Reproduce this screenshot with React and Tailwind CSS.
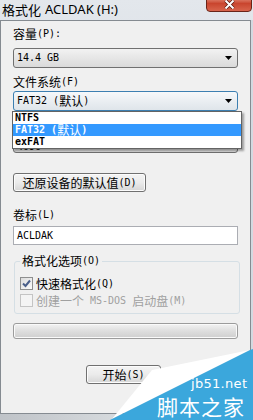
import React from "react";

// CJK text runs at the dialog's 12px, Latin runs use a 6px-wide mono like SimSun's half-width glyphs
const Z = ({ children, className = "" }) => (
  <span className={`font-['Noto_Sans_CJK_SC',sans-serif] text-[12px] ${className}`}>{children}</span>
);

const Arrow = () => (
  <svg width="7" height="4" viewBox="0 0 7 4">
    <path d="M0 0 H7 L3.5 4 Z" fill="#000" />
  </svg>
);

function Combo({ children, focused }) {
  return (
    <div
      className={`h-[20px] flex items-center justify-between pl-[3px] pr-[5px] rounded-[3px] border ${
        focused
          ? "border-[#3c7fb1] bg-gradient-to-b from-[#f6f8fa] to-[#dfe5ea]"
          : "border-[#707070] bg-gradient-to-b from-[#f2f2f2] to-[#dadada]"
      }`}
    >
      <div className="flex items-center">{children}</div>
      <Arrow />
    </div>
  );
}

function Button({ children, className = "" }) {
  return (
    <div
      className={`h-[19px] flex items-center justify-center rounded-[3px] border border-[#707070] bg-gradient-to-b from-[#f4f4f4] via-[#ebebeb] to-[#d6d6d6] shadow-[inset_0_0_0_1px_#fcfcfc] ${className}`}
    >
      {children}
    </div>
  );
}

function Check({ checked, disabled }) {
  return (
    <div
      className={`w-[13px] h-[13px] border flex items-center justify-center ${
        disabled ? "border-[#c4c4c4] bg-[#f4f4f4]" : "border-[#8e8f8f] bg-gradient-to-br from-[#dcdcdc] to-[#fbfbfb]"
      }`}
    >
      {checked && (
        <svg width="9" height="9" viewBox="0 0 9 9">
          <path d="M1 4.5 L3.5 7 L8 1.5" stroke="#4a5f8a" strokeWidth="2" fill="none" />
        </svg>
      )}
    </div>
  );
}

export default function App() {
  return (
    <div className="relative w-[253px] h-[420px] overflow-hidden bg-gradient-to-b from-[#e3e7ec] via-[#d2d8df] to-[#c9cfd6]">
      {/* title bar */}
      <div className="h-[20px] flex items-center pl-[2px] text-[13px] text-black font-['Noto_Sans','Noto_Sans_CJK_SC',sans-serif]">
        <span className="font-['Noto_Sans_CJK_SC',sans-serif]">格式化</span>
        <span className="ml-[4px]">ACLDAK (H:)</span>
      </div>
      <div className="absolute left-[206px] top-[-5px] w-[46px] h-[17px] rounded-b-[4px] border border-[#6a2418] bg-gradient-to-b from-[#e9a08f] via-[#c9452e] to-[#d8644c] flex items-end justify-center pb-[2px]">
        <svg width="11" height="9" viewBox="0 0 11 9">
          <path d="M1.5 0.5 L9.5 8.5 M9.5 0.5 L1.5 8.5" stroke="#5a1a10" strokeWidth="3.4" />
          <path d="M1.5 0.5 L9.5 8.5 M9.5 0.5 L1.5 8.5" stroke="#ffffff" strokeWidth="2" />
        </svg>
      </div>

      {/* dialog body */}
      <div className="flex">
        <div className="w-[251px] h-[394px] border border-[#858b91] bg-[#f0f0f0] px-[12px] font-['DejaVu_Sans_Mono',monospace] text-[10px] leading-[14px] text-black">
          <div className="mt-[6px] h-[14px] flex items-center">
            <Z>容量</Z>(P):
          </div>
          <div className="mt-[7px]">
            <Combo>14.4 GB</Combo>
          </div>
          <div className="mt-[7px] h-[14px] flex items-center">
            <Z>文件系统</Z>(F)
          </div>
          <div className="relative mt-[2px]">
            <Combo focused>
              FAT32 (<Z>默认</Z>)
            </Combo>
            {/* open dropdown list */}
            <div className="absolute left-[-1px] top-[20px] w-[230px] z-10 bg-white border border-[#646464] shadow-[2px_2px_2px_rgba(0,0,0,0.35)] font-bold">
              <div className="h-[12px] flex items-center pl-[2px]">NTFS</div>
              <div className="h-[12px] flex items-center pl-[2px] bg-[#3399ff] text-white">
                FAT32 (<Z className="font-normal">默认</Z>)
              </div>
              <div className="h-[12px] flex items-center pl-[2px]">exFAT</div>
            </div>
          </div>
          {/* label row hidden behind the open list */}
          <div className="mt-[6px] h-[14px]" />
          <div className="mt-[2px]">
            <Combo>
              <span className="mt-[8px]">4096</span>
            </Combo>
          </div>

          <Button className="mt-[20px] w-[133px]">
            <Z>还原设备的默认值</Z>(D)
          </Button>

          <div className="mt-[16px] h-[14px] flex items-center">
            <Z>卷标</Z>(L)
          </div>
          <div className="mt-[4px] h-[19px] border border-[#abadb3] bg-white flex items-center pl-[3px]">
            ACLDAK
          </div>

          {/* format options group */}
          <div className="relative mt-[16px] ml-[1px] w-[226px] h-[53px] border border-[#d5dfe5] rounded-[3px] pt-[15px] pl-[5px]">
            <div className="absolute left-[5px] top-[-8px] px-[2px] bg-[#f0f0f0] h-[14px] flex items-center">
              <Z>格式化选项</Z>(O)
            </div>
            <div className="flex items-center gap-[3px] h-[13px]">
              <Check checked />
              <span className="flex items-center">
                <Z>快速格式化</Z>(Q)
              </span>
            </div>
            <div className="flex items-center gap-[3px] h-[13px] mt-[4px] text-[#a0a0a0]">
              <Check disabled />
              <span className="flex items-center">
                <Z>创建一个</Z>
                <span className="ml-[6px]">MS-DOS</span>
                <Z className="ml-[6px]">启动盘</Z>(M)
              </span>
            </div>
          </div>

          {/* progress bar */}
          <div className="mt-[9px] h-[16px] rounded-[3px] border border-[#9c9c9c] bg-gradient-to-b from-[#f3f3f3] via-[#dedede] to-[#cfcfcf] shadow-[inset_0_0_0_1px_#fafafa]" />

          <div className="flex">
            <Button className="mt-[26px] ml-[73px] w-[75px] h-[19px] border-[#3c7fb1] shadow-[inset_0_0_0_1px_#48d2fa]">
              <Z>开始</Z>(S)
            </Button>
          </div>
        </div>
        <div className="w-[2px] h-[394px] bg-[#d3d9e0]" />
      </div>
      <div className="h-[6px] bg-gradient-to-r from-[#bfc3c8] via-[#d8dcdf] to-[#b7bcc2]" />

      {/* jb51 watermark */}
      <svg className="absolute left-0 top-0" width="253" height="420" viewBox="0 0 253 420">
        <polygon points="152,370 250,350 112,419" fill="#ffffff" />
        <polygon points="250,350 253,349 253,420 110,420" fill="#3ba7dc" />
      </svg>
      <div className="absolute left-[191px] top-[377px] text-white text-[13px] leading-[13px] font-['DejaVu_Sans',sans-serif] tracking-[0.3px]">
        jb51.net
      </div>
      <div className="absolute left-[157px] top-[395px] text-white text-[21px] leading-[22px] font-['Noto_Sans_CJK_SC',sans-serif] tracking-[1px]">
        脚本之家
      </div>
    </div>
  );
}
